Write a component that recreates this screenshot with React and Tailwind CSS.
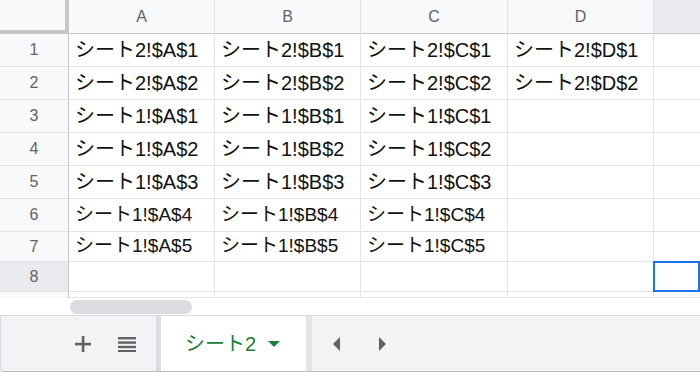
import React from "react";

const FONT = { fontFamily: '"Liberation Sans", "Noto Sans CJK JP", sans-serif' };

const data = [
  ["シート2!$A$1", "シート2!$B$1", "シート2!$C$1", "シート2!$D$1"],
  ["シート2!$A$2", "シート2!$B$2", "シート2!$C$2", "シート2!$D$2"],
  ["シート1!$A$1", "シート1!$B$1", "シート1!$C$1", ""],
  ["シート1!$A$2", "シート1!$B$2", "シート1!$C$2", ""],
  ["シート1!$A$3", "シート1!$B$3", "シート1!$C$3", ""],
  ["シート1!$A$4", "シート1!$B$4", "シート1!$C$4", ""],
  ["シート1!$A$5", "シート1!$B$5", "シート1!$C$5", ""],
  ["", "", "", ""],
];

function Cell({ children, small }) {
  return (
    <div
      className={
        "flex items-center overflow-hidden whitespace-nowrap border-r border-b border-[#e2e3e3] bg-white pl-[6px] text-[#111] " +
        (small ? "text-[19px]" : "text-[20px]")
      }
    >
      {children}
    </div>
  );
}

export default function App() {
  return (
    <div className="w-[700px] h-[372px] overflow-hidden bg-white" style={FONT}>
      <div className="grid grid-cols-[69px_146px_146px_147px_146px_1fr] grid-rows-[34px_33px_33px_33px_33px_33px_33px_30px_30px_6px]">
        <div className="bg-[#f8f9fa] border-r-[4px] border-b-[4px] border-[#c4c7c5]" />
        {["A", "B", "C", "D"].map((c) => (
          <div
            key={c}
            className="flex items-center justify-center bg-[#f8f9fa] border-r border-b border-[#c4c7c5] border-r-[#e2e3e3] text-[16px] text-[#5f6368]"
          >
            {c}
          </div>
        ))}
        <div className="bg-[#e8eaed] border-b border-[#c4c7c5]" />
        {data.map((row, i) => (
          <React.Fragment key={i}>
            <div
              className={
                "flex items-center justify-center border-r border-b border-[#c4c7c5] border-b-[#e2e3e3] text-[16px] text-[#5f6368] " +
                (i === 7 ? "bg-[#e8eaed]" : "bg-[#f8f9fa]")
              }
            >
              {i + 1}
            </div>
            {row.map((v, j) => (
              <Cell key={j} small={i >= 5}>
                {v}
              </Cell>
            ))}
            <div className="relative border-b border-[#e2e3e3] bg-white">
              {i === 7 && (
                <div className="absolute left-[-1px] top-[-1px] right-0 bottom-[-1px] border-2 border-[#1a73e8]" />
              )}
            </div>
          </React.Fragment>
        ))}
        <div className="bg-[#f8f9fa] border-r border-[#c4c7c5]" />
        <div className="border-r border-b border-[#e2e3e3]" />
        <div className="border-r border-b border-[#e2e3e3]" />
        <div className="border-r border-b border-[#e2e3e3]" />
        <div className="border-r border-b border-[#e2e3e3]" />
        <div className="border-b border-[#e2e3e3]" />
      </div>
      <div className="h-[17px] bg-white pt-[2px]">
        <div className="ml-[70px] h-[14px] w-[122px] rounded-full bg-[#dadce0]" />
      </div>
      <div className="flex h-[57px] items-stretch rounded-bl-[4px] border-l border-b border-t border-[#dadce0] border-b-[#bdbdbd] bg-[#f1f3f4]">
        <div className="flex w-[155px] items-center">
          <svg width="16" height="16" viewBox="0 0 16 16" className="ml-[74px]">
            <rect x="6.8" y="0" width="2.6" height="16" fill="#5f6368" />
            <rect x="0" y="6.8" width="16" height="2.6" fill="#5f6368" />
          </svg>
          <svg width="18" height="16" viewBox="0 0 18 16" className="ml-[27px]">
            <rect x="0" y="1" width="18" height="2.4" fill="#5f6368" />
            <rect x="0" y="5.4" width="18" height="2.4" fill="#5f6368" />
            <rect x="0" y="9.8" width="18" height="2.4" fill="#5f6368" />
            <rect x="0" y="14" width="18" height="2.2" fill="#5f6368" />
          </svg>
        </div>
        <div className="w-[5px] bg-[#dadce0]" />
        <div className="flex w-[145px] items-center bg-white">
          <span className="ml-[24px] text-[20px] text-[#188038]">シート2</span>
          <svg width="12" height="7" viewBox="0 0 12 7" className="ml-[12px] mt-[2px]">
            <path d="M0 0 L12 0 L6 6 Z" fill="#188038" />
          </svg>
        </div>
        <div className="w-[6px] bg-[#e3e3e3]" />
        <div className="flex items-center">
          <svg width="8" height="14" viewBox="0 0 8 14" className="ml-[21px]">
            <path d="M7 0 L7 14 L0 7 Z" fill="#5f6368" />
          </svg>
          <svg width="8" height="14" viewBox="0 0 8 14" className="ml-[37px]">
            <path d="M1 0 L1 14 L8 7 Z" fill="#5f6368" />
          </svg>
        </div>
      </div>
    </div>
  );
}
